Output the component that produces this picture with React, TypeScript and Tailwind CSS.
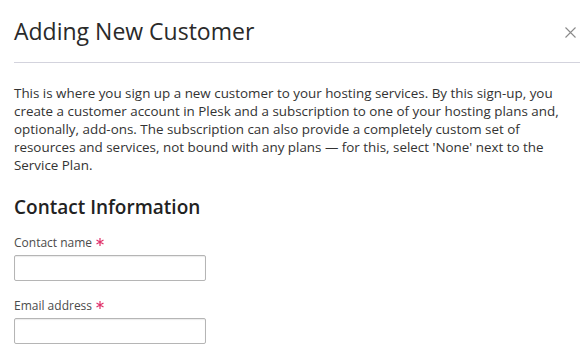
import React from "react";

// thin six-point required marker
const Required = () => (
  <svg width="8" height="8" viewBox="0 0 8 8" className="ml-[4px] inline-block align-[1px]" stroke="#e0336c" strokeWidth="1.2" fill="none">
    <path d="M4 0 L4 8 M0.5 2 L7.5 6 M0.5 6 L7.5 2" />
  </svg>
);

const Field = ({ label }: { label: string }) => (
  <div className="flex flex-col">
    <label className="text-[12px] leading-[16px] text-[#4b4b4b]">
      {label}
      <Required />
    </label>
    <input
      type="text"
      className="mt-[4px] h-[26px] w-[192px] rounded-[2px] border border-[#b5b5b5] bg-white px-2 text-[13px] shadow-[inset_0_1px_1px_rgba(0,0,0,0.08)] outline-none"
    />
  </div>
);

const App = () => {
  return (
    <div className="h-[358px] w-[580px] overflow-hidden bg-white font-['Open_Sans',sans-serif] text-[#222]">
      {/* Header */}
      <div className="ml-[14px] flex h-[63px] items-start justify-between border-b border-[#d3d3dd] pt-[15px]">
        <h1 className="text-[23px] font-normal leading-[32px] text-[#2a2a2a]">Adding New Customer</h1>
        <button className="mr-[4px] mt-[12px] text-[#8a8a8a]">
          <svg width="11" height="11" viewBox="0 0 11 11" fill="none" stroke="currentColor" strokeWidth="1.1">
            <path d="M0.5 0.5 L10.5 10.5 M10.5 0.5 L0.5 10.5" />
          </svg>
        </button>
      </div>

      <div className="px-[14px]">
        <p className="mt-[21px] text-[13.4px] leading-[18px] text-[#333]">
          This is where you sign up a new customer to your hosting services. By this sign-up, you create a
          customer account in Plesk and a subscription to one of your hosting plans and, optionally, add-ons.
          The subscription can also provide a completely custom set of resources and services, not bound with
          any plans — for this, select 'None' next to the Service Plan.
        </p>

        <h2 className="mt-[21px] text-[19px] font-semibold leading-[24px] text-[#222]">Contact Information</h2>

        <div className="mt-[16px] flex flex-col gap-[17px]">
          <Field label="Contact name" />
          <Field label="Email address" />
        </div>
      </div>
    </div>
  );
};

export default App;
